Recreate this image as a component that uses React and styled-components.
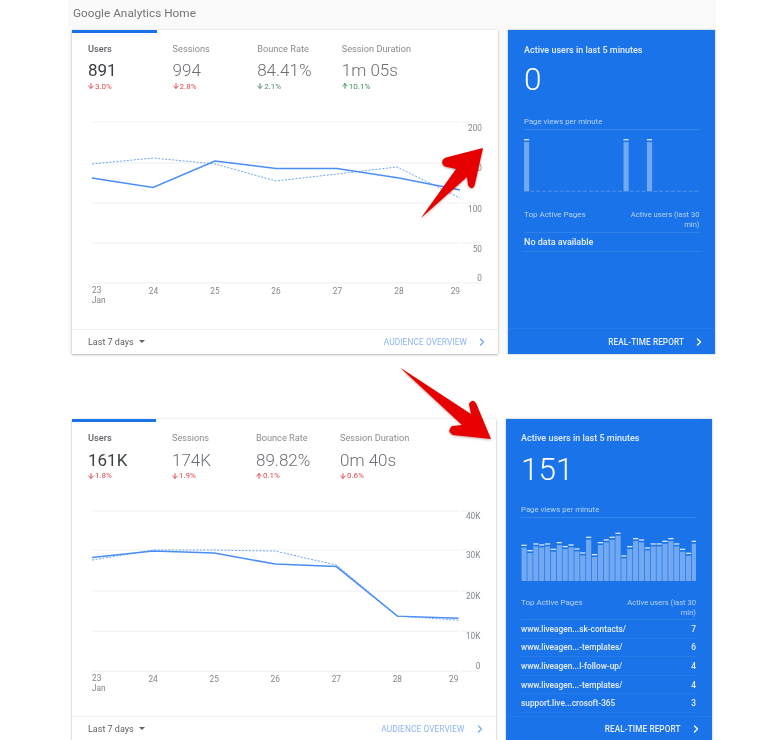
import React from 'react';
import styled, { createGlobalStyle } from 'styled-components';
import { ChevronRight, ArrowDown, ArrowUp } from 'lucide-react';

const Global = createGlobalStyle`
  html, body { margin: 0; padding: 0; background: #fff; overflow: hidden; }
  body { font-family: Roboto, "Liberation Sans", sans-serif; }
`;

const Page = styled.div`
  position: relative;
  width: 768px;
  height: 740px;
  overflow: hidden;
  background: #fff;
  filter: blur(0.5px);
`;

const Section = styled.section`
  margin-left: 68px;
  width: 648px;
  padding-left: 4px;
  box-sizing: border-box;
  background: ${p => p.$tint};
`;

const SectionTitle = styled.div`
  height: 30px;
  line-height: 26px;
  padding-left: 1px;
  font-size: 11.8px;
  color: #757575;
`;

const Spacer = styled.div`
  height: 65px;
`;

const Row = styled.div`
  display: grid;
  grid-template-columns: ${p => p.$main}px ${p => p.$side}px;
  column-gap: ${p => p.$gap}px;
  height: ${p => p.$height}px;
`;

const Card = styled.div`
  display: flex;
  flex-direction: column;
  background: #fff;
  box-shadow: 0 1px 2px rgba(60, 64, 67, 0.35), 0 0 2px rgba(60, 64, 67, 0.12);
`;

const Tabs = styled.div`
  display: grid;
  grid-template-columns: repeat(4, ${p => p.$col}px);
  height: 85px;
`;

const Tab = styled.div`
  box-sizing: border-box;
  padding: 10px 0 0 16px;
  border-top: 3px solid ${p => (p.$active ? '#1a73e8' : 'transparent')};
`;

const TabLabel = styled.div`
  font-size: 9.2px;
  line-height: 12px;
  white-space: nowrap;
  font-weight: ${p => (p.$active ? 500 : 400)};
  color: ${p => (p.$active ? '#5f6368' : '#8a8d91')};
`;

const TabValue = styled.div`
  margin-top: ${p => p.$top}px;
  font-size: 17px;
  line-height: 22px;
  font-weight: ${p => (p.$active ? 400 : 300)};
  color: ${p => (p.$active ? '#3c4043' : '#6b6f73')};
  white-space: nowrap;
`;

const Delta = styled.div`
  display: flex;
  align-items: center;
  height: 10px;
  font-size: 8px;
  color: ${p => p.$color};
  opacity: 0.85;
  svg { margin-left: -1px; }
`;

const ChartSvg = styled.svg`
  display: block;
  flex: 1;
  width: 100%;
  min-height: 0;
`;

const AxisText = styled.text`
  font-family: Roboto, "Liberation Sans", sans-serif;
  font-size: 8.3px;
  fill: #80868b;
`;

const CardFooter = styled.div`
  box-sizing: border-box;
  display: flex;
  align-items: center;
  justify-content: space-between;
  height: 25px;
  flex: none;
  padding: 0 10px 0 16px;
  border-top: 1px solid #eeeeee;
`;

const RangeButton = styled.div`
  display: flex;
  align-items: center;
  gap: 5px;
  margin-top: -1px;
  font-size: 9px;
  color: #5f6368;
`;

const Caret = styled.span`
  width: 0;
  height: 0;
  border-left: 3px solid transparent;
  border-right: 3px solid transparent;
  border-top: 3px solid #5f6368;
`;

const FooterLink = styled.div`
  display: flex;
  align-items: center;
  gap: 9px;
  font-size: ${p => p.$size}px;
  letter-spacing: 0.1px;
  color: ${p => p.$color};
  font-weight: ${p => p.$weight};
  svg { color: ${p => p.$icon}; }
`;

const BlueCard = styled.div`
  display: flex;
  flex-direction: column;
  background: #1a73e8;
  color: #fff;
  box-shadow: 0 0 2px rgba(60, 64, 67, 0.4);
`;

const BlueBody = styled.div`
  flex: 1;
  min-height: 0;
  padding: ${p => p.$top}px 15.5px 0 ${p => p.$left}px;
`;

const BlueTitle = styled.div`
  font-size: 9px;
  line-height: 12px;
  font-weight: 500;
  color: #e4eefc;
  white-space: nowrap;
`;

const BigCount = styled.div`
  font-size: 31.5px;
  line-height: 38px;
  font-weight: 300;
  margin-top: ${p => p.$top}px;
`;

const ViewsLabel = styled.div`
  margin-top: ${p => p.$top}px;
  padding-bottom: 2px;
  font-size: 7.8px;
  line-height: 11px;
  color: #b7d3f7;
  border-bottom: 1px solid rgba(255, 255, 255, 0.12);
`;

const BarsSvg = styled.svg`
  display: block;
  width: 100%;
  margin-top: ${p => p.$top}px;
`;

const TableHead = styled.div`
  display: flex;
  justify-content: space-between;
  margin-top: ${p => p.$top}px;
  padding-bottom: ${p => p.$bottom}px;
  font-size: 8px;
  line-height: 10px;
  color: #b7d3f7;
  border-bottom: 1px solid rgba(255, 255, 255, 0.1);
`;

const HeadRight = styled.span`
  width: 72px;
  font-size: 7.6px;
  text-align: right;
`;

const TableRow = styled.div`
  display: flex;
  justify-content: space-between;
  align-items: center;
  height: ${p => p.$height}px;
  box-sizing: border-box;
  font-size: ${p => p.$size}px;
  font-weight: 500;
  color: #e8f0fd;
  border-bottom: 1px solid rgba(255, 255, 255, ${p => p.$line});
`;

const BlueFooter = styled.div`
  box-sizing: border-box;
  flex: none;
  display: flex;
  justify-content: flex-end;
  align-items: center;
  height: ${p => p.$height}px;
  padding-right: ${p => p.$right}px;
  border-top: 1px solid rgba(255, 255, 255, 0.05);
`;

const Arrow = styled.svg`
  position: absolute;
  left: ${p => p.$x}px;
  top: ${p => p.$y}px;
  filter: drop-shadow(0 1px 1px rgba(90, 0, 0, 0.35));
`;

const RED = '#d9272e';
const GREEN = '#188038';
const GREY = '#3c6e52';

function Metrics({ items, col, gap }) {
  return (
    <Tabs $col={col}>
      {items.map((m, i) => (
        <Tab key={m.label} $active={i === 0}>
          <TabLabel $active={i === 0}>{m.label}</TabLabel>
          <TabValue $active={i === 0} $top={gap}>{m.value}</TabValue>
          <Delta $color={m.color}>
            {m.up ? <ArrowUp size={8} strokeWidth={3} /> : <ArrowDown size={8} strokeWidth={3} />}
            {m.delta}
          </Delta>
        </Tab>
      ))}
    </Tabs>
  );
}

const pts = arr => arr.map(p => p.join(',')).join(' ');

function LineChart({ box, grid, gridX, tickX, labels, xs, xBase, solid, dashed }) {
  const [bx, by, bw, bh] = box;
  return (
    <ChartSvg viewBox={`${bx} ${by} ${bw} ${bh}`} preserveAspectRatio="xMinYMin">
      {grid.map(y => (
        <g key={y}>
          <line x1={gridX[0]} x2={gridX[1]} y1={y} y2={y} stroke="#efefef" strokeWidth="1" />
          <line x1={tickX[0]} x2={tickX[1]} y1={y} y2={y} stroke="#efefef" strokeWidth="1" />
        </g>
      ))}
      {labels.map(l => (
        <AxisText key={l.t} x={tickX[1]} y={l.y} textAnchor="end">{l.t}</AxisText>
      ))}
      {xs.map((x, i) => (
        <AxisText key={x} x={x} y={i === 0 ? xBase - 0.7 : xBase} textAnchor={i === 6 ? 'end' : i === 0 ? 'start' : 'middle'}>
          {23 + i}
        </AxisText>
      ))}
      <AxisText x={xs[0]} y={xBase + 9.1}>Jan</AxisText>
      <polyline points={pts(dashed)} fill="none" stroke="#6ea6f7" strokeWidth="1" strokeDasharray="2 1.5" />
      <polyline points={pts(solid)} fill="none" stroke="#4a8ef5" strokeWidth="1.5" />
    </ChartSvg>
  );
}

function Bars({ box, x0, base, step, tops }) {
  const [bx, by, bw, bh] = box;
  return (
    <BarsSvg $top={box[4]} viewBox={`${bx} ${by} ${bw} ${bh}`} height={bh}>
      {tops.map((t, i) => {
        const x = x0 + i * step;
        if (t === null) {
          return <rect key={i} x={x + 0.5} y={base - 0.6} width={4} height={0.7} fill="rgba(255,255,255,.35)" />;
        }
        return (
          <g key={i}>
            <rect x={x} y={t} width={5.2} height={1.3} fill="rgba(255,255,255,.85)" />
            <rect x={x} y={t + 3} width={5.2} height={base - t - 3} fill="rgba(255,255,255,.38)" />
          </g>
        );
      })}
    </BarsSvg>
  );
}

const topsA = Array.from({ length: 30 }, (_, i) => ([0, 17, 21].includes(i) ? 139 : null));
const topsB = [401, 417, 397, 400, 397, 413, 393, 405, 400, 412, 424, 377, 429, 393, 385, 377, 365, 433, 405, 381, 385, 409, 397, 397, 389, 381, 397, 413, 425, 389].map(z => 410 + z / 3);

const metricsA = [
  { label: 'Users', value: '891', delta: '3.0%', color: RED },
  { label: 'Sessions', value: '994', delta: '2.8%', color: RED },
  { label: 'Bounce Rate', value: '84.41%', delta: '2.1%', color: GREY },
  { label: 'Session Duration', value: '1m 05s', delta: '10.1%', color: GREEN, up: true },
];
const metricsB = [
  { label: 'Users', value: '161K', delta: '1.8%', color: RED },
  { label: 'Sessions', value: '174K', delta: '1.9%', color: RED },
  { label: 'Bounce Rate', value: '89.82%', delta: '0.1%', color: RED, up: true },
  { label: 'Session Duration', value: '0m 40s', delta: '0.6%', color: RED },
];
const pages = [
  ['www.liveagen...sk-contacts/', 7],
  ['www.liveagen...-templates/', 6],
  ['www.liveagen...l-follow-up/', 4],
  ['www.liveagen...-templates/', 4],
  ['support.live...crosoft-365', 3],
];

function AudienceLink() {
  return (
    <FooterLink $size={8.3} $color="#8ab4f8" $icon="#6ea6f7" $weight={400}>
      AUDIENCE OVERVIEW <ChevronRight size={12} strokeWidth={2.4} />
    </FooterLink>
  );
}

function RealtimeLink() {
  return (
    <FooterLink $size={8.2} $color="#e8f0fd" $icon="#ffffff" $weight={500}>
      REAL-TIME REPORT <ChevronRight size={12} strokeWidth={2.8} />
    </FooterLink>
  );
}

export default function App() {
  return (
    <Page>
      <Global />
      <Section $tint="#fafafa">
        <SectionTitle>Google Analytics Home</SectionTitle>
        <Row $main={426} $side={207} $gap={10} $height={324}>
          <Card>
            <Metrics items={metricsA} col={84.6} gap={4} />
            <LineChart
              box={[72, 115, 426, 214]}
              grid={[122, 163, 203, 243, 283]}
              gridX={[92, 460]}
              tickX={[462, 482]}
              labels={[{ t: '200', y: 131 }, { t: '150', y: 171 }, { t: '100', y: 212 }, { t: '50', y: 252 }, { t: '0', y: 281 }]}
              xs={[92, 153.5, 215, 276, 337.5, 399, 460]}
              xBase={294}
              solid={[[92, 178], [153, 187.5], [215, 161], [276, 168.5], [337, 168.5], [399, 178], [460, 190]]}
              dashed={[[92, 164], [153, 158], [215, 164], [276, 181], [337, 174], [397, 167], [460, 198]]}
            />
            <CardFooter>
              <RangeButton>Last 7 days <Caret /></RangeButton>
              <AudienceLink />
            </CardFooter>
          </Card>
          <BlueCard>
            <BlueBody $top={14} $left={16}>
              <BlueTitle>Active users in last 5 minutes</BlueTitle>
              <BigCount $top={5}>0</BigCount>
              <ViewsLabel $top={17}>Page views per minute</ViewsLabel>
              <Bars box={[524, 130, 176, 62, 0]} x0={524} base={191.5} step={5.87} tops={topsA} />
              <TableHead $top={18} $bottom={2}><span>Top Active Pages</span><HeadRight>Active users (last 30 min)</HeadRight></TableHead>
              <TableRow $height={19} $size={9} $line={0.1}><span>No data available</span></TableRow>
            </BlueBody>
            <BlueFooter $height={26} $right={10}>
              <RealtimeLink />
            </BlueFooter>
          </BlueCard>
        </Row>
      </Section>
      <Spacer />
      <Section $tint="#fff">
        <Row $main={423.5} $side={206} $gap={10} $height={322}>
          <Card>
            <Metrics items={metricsB} col={84} gap={4.5} />
            <LineChart
              box={[72, 504, 423, 212]}
              grid={[511, 550, 591, 631, 671]}
              gridX={[92, 458]}
              tickX={[460, 480]}
              labels={[{ t: '40K', y: 519 }, { t: '30K', y: 558 }, { t: '20K', y: 599 }, { t: '10K', y: 639 }, { t: '0', y: 669 }]}
              xs={[92, 153, 214, 275, 336, 397, 458]}
              xBase={681.5}
              solid={[[92, 557.5], [153, 551], [214, 553], [275, 564], [336, 566.5], [397, 616], [458, 618]]}
              dashed={[[92, 560], [153, 550], [214, 550], [275, 551], [336, 565], [397, 616], [458, 620]]}
            />
            <CardFooter>
              <RangeButton>Last 7 days <Caret /></RangeButton>
              <AudienceLink />
            </CardFooter>
          </Card>
          <BlueCard>
            <BlueBody $top={13} $left={15.5}>
              <BlueTitle>Active users in last 5 minutes</BlueTitle>
              <BigCount $top={7}>151</BigCount>
              <ViewsLabel $top={15}>Page views per minute</ViewsLabel>
              <Bars box={[521, 518, 175, 62, 1]} x0={521.5} base={580} step={5.87} tops={topsB} />
              <TableHead $top={17} $bottom={1}><span>Top Active Pages</span><HeadRight>Active users (last 30 min)</HeadRight></TableHead>
              {pages.map(([p, n]) => (
                <TableRow key={p + n} $height={18.6} $size={8.3} $line={0.06}><span>{p}</span><span>{n}</span></TableRow>
              ))}
            </BlueBody>
            <BlueFooter $height={25} $right={10}>
              <RealtimeLink />
            </BlueFooter>
          </BlueCard>
        </Row>
      </Section>
      <Arrow $x={415} $y={142} width={74} height={82} viewBox="415 142 74 82">
        <path fill="#e60000" d="M483,148 L446,157.5 Q441,159.5 442.5,164 Q444,167 447,167 L456,169 L421,218 L467,177 L468,185 Q471,191 474.5,186 Z" />
      </Arrow>
      <Arrow $x={395} $y={362} width={100} height={82} viewBox="395 362 100 82">
        <path fill="#e60000" d="M400,367.5 L471,414 L469,404 Q472,398 476,403 L491,439 L453,435 Q446,431 452,426 L462,425 Z" />
      </Arrow>
    </Page>
  );
}
